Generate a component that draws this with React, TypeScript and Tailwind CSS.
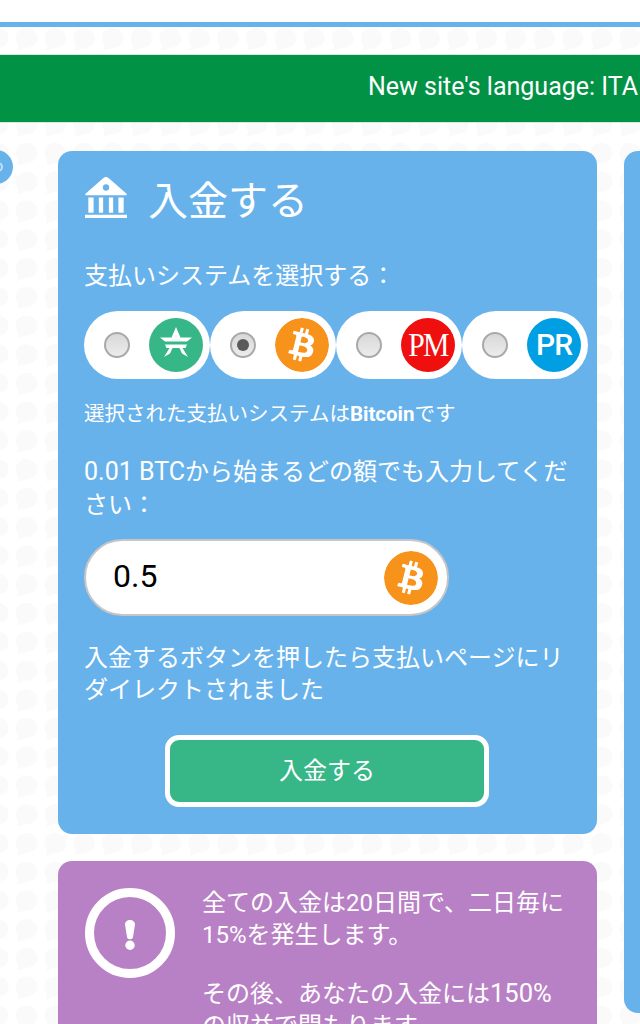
const BtcIcon = () => (
  <svg viewBox="0 0 24 24" className="h-[54px] w-[54px] rounded-full bg-white">
    <path
      fill="#f7931a"
      d="M23.638 14.904c-1.602 6.43-8.113 10.34-14.542 8.736C2.67 22.05-1.244 15.525.362 9.105 1.962 2.67 8.475-1.243 14.9.358c6.43 1.605 10.342 8.115 8.738 14.548v-.002zm-6.35-4.613c.24-1.59-.974-2.45-2.64-3.03l.54-2.153-1.315-.33-.525 2.107c-.345-.087-.705-.167-1.064-.25l.526-2.127-1.32-.33-.54 2.165c-.285-.067-.565-.132-.84-.2l-1.815-.45-.35 1.407s.975.225.955.236c.535.136.63.486.615.766l-1.477 5.92c-.075.166-.24.406-.614.314.015.02-.96-.24-.96-.24l-.66 1.51 1.71.426.93.242-.54 2.19 1.32.327.54-2.17c.36.1.705.19 1.05.273l-.51 2.154 1.32.33.545-2.19c2.24.427 3.93.257 4.64-1.774.57-1.637-.03-2.58-1.217-3.196.854-.193 1.5-.76 1.68-1.93h.01zm-3.01 4.22c-.404 1.64-3.157.75-4.05.53l.72-2.9c.896.23 3.757.67 3.33 2.37zm.41-4.24c-.37 1.49-2.662.735-3.405.55l.654-2.64c.744.18 3.137.524 2.75 2.084v.006z"
    />
  </svg>
)

const AdvIcon = () => (
  <svg viewBox="0 0 54 54" className="h-[54px] w-[54px]">
    <circle cx="27" cy="27" r="27" fill="#37b787" />
    <path
      d="M27 9l4.500 10.500H43l-5 4H16l-5-4h11.500zM16 26.500h22l-1.500 3.500h-3l5.500 9-6-3.500-2.500-5.500h-7l-2.500 5.500-6 3.500 5.500-9h-3z"
      fill="#fff"
    />
  </svg>
)

const PmIcon = () => (
  <span className="flex h-[54px] w-[54px] items-center justify-center rounded-full bg-[#f00f0f] font-['Liberation_Serif',serif] text-[33px] leading-none text-white">
    <span className="scale-x-[0.9] tracking-[-2px]">PM</span>
  </span>
)

const PrIcon = () => (
  <span className="flex h-[54px] w-[54px] items-center justify-center rounded-full bg-[#009fe3] font-['Roboto',sans-serif] text-[30px] font-medium leading-none tracking-[-1px] text-white">
    PR
  </span>
)

const Radio = ({ checked = false }: { checked?: boolean }) => (
  <span className="flex h-[26px] w-[26px] items-center justify-center rounded-full border-2 border-[#a9a9a9] bg-[linear-gradient(180deg,#d8d8d8,#ececec)]">
    {checked && <span className="h-[12px] w-[12px] rounded-full bg-[#5a5a5a]" />}
  </span>
)

const systems = [
  { id: 'advcash', icon: <AdvIcon />, checked: false },
  { id: 'bitcoin', icon: <BtcIcon />, checked: true },
  { id: 'pm', icon: <PmIcon />, checked: false },
  { id: 'payeer', icon: <PrIcon />, checked: false },
]

const App = () => {
  return (
    <div className="relative h-[1024px] overflow-hidden bg-white font-['Roboto','Noto_Sans_CJK_JP',sans-serif] text-white">
      <svg className="absolute inset-0 h-full w-full" aria-hidden="true">
        <defs>
          <pattern id="bubbles" x="16" y="28" width="28.75" height="28.75" patternUnits="userSpaceOnUse">
            <path d="M11 0a10.500 10 0 1 1 0 20c-1.500 0-3 .2-4.500 1-2 .8-4 1-6 1 1.500-1.500 2-3 1.300-6A10.500 10 0 0 1 11 0z" fill="#fafafa" />
          </pattern>
        </defs>
        <rect width="640" height="1024" fill="url(#bubbles)" />
      </svg>

      <div className="relative">
        <div className="h-[27px] border-b-[5px] border-[#68b2ec] bg-white" />

        <div className="mt-[27px] flex h-[69px] items-center justify-end overflow-hidden whitespace-nowrap border-y border-[#d9e6dc] bg-[#029245] pb-[3px] pr-[2px] text-[25px]">
          New site's language: ITA
        </div>

        <div className="mt-[28px] flex gap-[27px] pl-[58px]">
          <main className="w-[539px] shrink-0">
            <section className="h-[683px] rounded-[14px] bg-[#68b2ec] pl-[26px] pr-[27px] pt-[27px]">
              <div className="flex h-[48px] items-center">
                <svg viewBox="0 0 44 44" className="mb-[8px] ml-px h-[42px] w-[42px]" fill="#fff">
                  <path d="M22 0c1 0 2 .4 3 1.300L43.500 17.600c.6.6.3 1.400-.6 1.400H1.100c-.9 0-1.200-.8-.6-1.400L19 1.300C20 .4 21 0 22 0z" />
                  <circle cx="22" cy="11" r="3.300" fill="#68b2ec" />
                  <path d="M3.500 21.500h5.500v16H3.500zM14.500 21.500H19v16h-4.500zM25 21.500h4.500v16H25zM35 21.500h5.500v16H35zM0 39.500h44V43H0z" />
                </svg>
                <h1 className="ml-[21px] text-[40px] font-normal leading-none">入金する</h1>
              </div>

              <p className="mt-[35px] text-[24px] leading-[30px]">支払いシステムを選択する：</p>

              <div className="mt-[20px] flex">
                {systems.map((system) => (
                  <label
                    key={system.id}
                    className="flex h-[68px] w-[126px] shrink-0 items-center justify-between rounded-full bg-white pl-[20px] pr-[7px]"
                  >
                    <Radio checked={system.checked} />
                    {system.icon}
                  </label>
                ))}
              </div>

              <p className="mt-[20px] text-[20.5px] leading-[30px]">
                選択された支払いシステムは<b className="font-bold">Bitcoin</b>です
              </p>

              <p className="mt-[27px] text-[24px] leading-[33px]">
                <span className="text-[25px] leading-none">0.01 BTC</span>から始まるどの額でも入力してください：
              </p>

              <div className="mt-[17px] flex h-[77px] w-[365px] items-center justify-between rounded-full border-2 border-[#c6c6c6] bg-white pl-[27px] pr-[9px]">
                <span className="mb-[4px] text-[32px] leading-none text-black">0.5</span>
                <BtcIcon />
              </div>

              <p className="mt-[26px] text-[24px] leading-[32px]">
                入金するボタンを押したら支払いページにリダイレクトされました
              </p>

              <div className="mt-[29px] flex justify-center">
                <button className="h-[72px] w-[324px] rounded-[14px] border-[5px] border-white bg-[#37b787] text-[24px]">
                  入金する
                </button>
              </div>
            </section>

            <section className="mt-[27px] flex h-[300px] rounded-[14px] bg-[#b981c5] pl-[27px] pr-[27px] pt-[27px]">
              <svg viewBox="0 0 90 90" className="h-[90px] w-[90px] shrink-0">
                <circle cx="45" cy="45" r="40.500" fill="none" stroke="#fff" strokeWidth="9" />
                <path d="M45 32c2.800 0 5 1.800 5 4.500l-2 12.500c-.2 1.500-1.300 2.200-3 2.200s-2.800-.7-3-2.200l-2-12.500c0-2.700 2.200-4.500 5-4.500z" fill="#fff" />
                <circle cx="45" cy="57.300" r="4.700" fill="#fff" />
              </svg>
              <div className="ml-[27px] text-[24px] leading-[32px]">
                <p className="mt-[-1px]">全ての入金は20日間で、二日毎に15%を発生します。</p>
                <p className="mt-[27px]">
                  その後、あなたの入金には<span className="text-[25.500px] leading-none">150%</span>の収益で間もります。
                </p>
              </div>
            </section>
          </main>

          <div className="h-[862px] w-[100px] shrink-0 rounded-[14px] bg-[#68b2ec]" />
        </div>

        <div className="absolute left-[-21px] top-[150px] h-[34px] w-[34px] rounded-full bg-[#68b2ec]">
          <span className="absolute right-[10px] top-[12px] h-[10px] w-[5px] rounded-r-full border-2 border-l-0 border-white/60" />
        </div>
      </div>
    </div>
  )
}

export default App
